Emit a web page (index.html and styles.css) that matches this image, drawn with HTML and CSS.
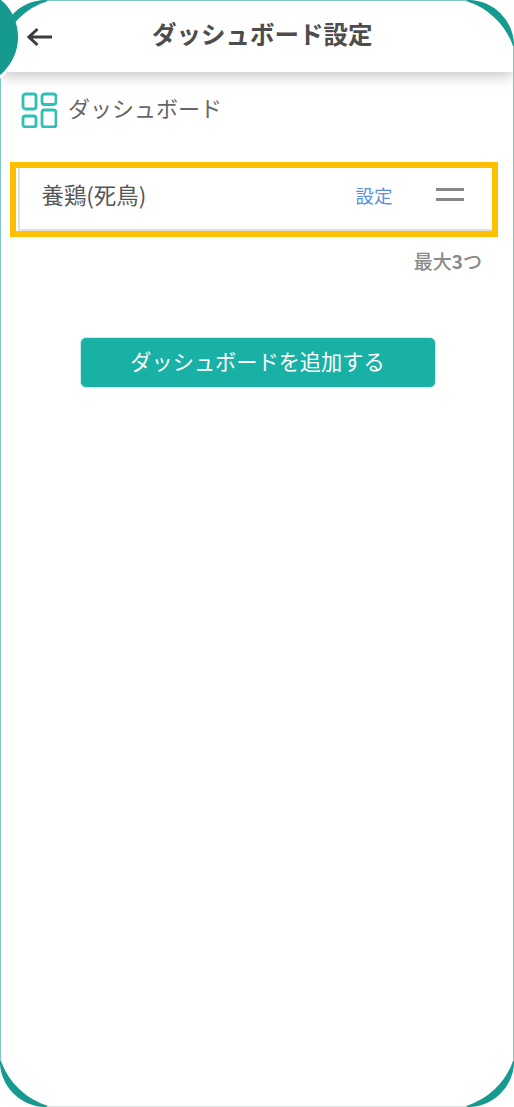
FILE: index.html
```html
<!DOCTYPE html>
<html lang="ja">
  <head>
    <meta charset="UTF-8" />
    <meta name="viewport" content="width=device-width, initial-scale=1.0" />
    <title>ダッシュボード設定</title>
    <link rel="stylesheet" href="styles.css">
  </head>
  <body>
    <div class="screen">
      <header class="top-bar">
        <button class="back-button" aria-label="戻る">
          <svg width="26" height="20" viewBox="0 0 26 20" fill="none" stroke="#3c3c3c" stroke-width="3">
            <path d="M25 10H2M10.500 2L2 10l8.500 8" />
          </svg>
        </button>
        <h1 class="page-title">ダッシュボード設定</h1>
      </header>

      <div class="section-label">
        <svg class="section-icon" width="36" height="36" viewBox="0 0 36 36" fill="none" stroke="#2fbfb3" stroke-width="2.800">
          <rect x="2" y="2" width="13" height="15" rx="2.500" />
          <rect x="21" y="2" width="14" height="10.500" rx="2.500" />
          <rect x="2" y="24" width="13" height="11" rx="2.500" />
          <rect x="21" y="18" width="14" height="17" rx="2.500" />
        </svg>
        <span class="section-text">ダッシュボード</span>
      </div>

      <div class="highlight">
        <div class="dashboard-row">
          <span class="dashboard-name">養鶏(死鳥)</span>
          <a class="settings-link">設定</a>
          <span class="drag-handle"></span>
        </div>
      </div>

      <p class="limit-note">最大<b>3</b>つ</p>

      <button class="add-button">ダッシュボードを追加する</button>
    </div>

    <div class="side-dot"></div>
    <svg class="frame-corners" width="514" height="1107" viewBox="0 0 514 1107">
      <path d="M468 0A46 46 0 0 1 514 46L513 46A72 72 0 0 0 466 1Z" fill="#169a90" />
      <path d="M468 0A46 46 0 0 1 514 46L513 46A72 72 0 0 0 466 1Z" fill="#169a90" transform="matrix(1 0 0 -1 0 1107)" />
      <path d="M468 0A46 46 0 0 1 514 46L513 46A72 72 0 0 0 466 1Z" fill="#169a90" transform="matrix(-1 0 0 -1 514 1107)" />
      <path d="M468 0A46 46 0 0 1 514 46L513 46A72 72 0 0 0 466 1Z" fill="#169a90" transform="matrix(-1 0 0 1 514 0)" />
    </svg>
  </body>
</html>
```

FILE: styles.css
```css
body {
  margin: 0;
  width: 514px;
  height: 1107px;
  background: white;
  font-family: "Noto Sans CJK JP", "Noto Sans", sans-serif;
  color: #555;
  overflow: hidden;
  position: relative;
}

.screen {
  height: 1107px;
  box-sizing: border-box;
  border-left: 1.500px solid #7fc9c4;
  border-right: 1.500px solid #7fc9c4;
  border-top: 1px solid #7fc9c4;
  border-bottom: 1px solid #d5e6e4;
  border-radius: 46px;
  overflow: hidden;
  display: flex;
  flex-direction: column;
}

.top-bar {
  height: 71px;
  flex-shrink: 0;
  display: flex;
  align-items: center;
  background: white;
  box-shadow: 0 5px 12px rgba(0, 0, 0, 0.2);
  position: relative;
}

.back-button {
  margin-left: 26px;
  padding: 0;
  border: none;
  background: none;
  display: flex;
}

.page-title {
  margin: 0 0 4px 99px;
  font-size: 24.500px;
  font-weight: 700;
  color: #4d4d4d;
  line-height: 1;
}

.section-label {
  margin: 20px 0 0 20px;
  display: flex;
  align-items: center;
  gap: 11px;
  font-size: 22px;
  line-height: 30px;
  color: #666;
}

.section-text {
  margin-bottom: 6px;
}

.highlight {
  margin: 34px 0 0 8.500px;
  width: 488px;
  height: 75px;
  box-sizing: border-box;
  border: 6px solid #ffc000;
}

.dashboard-row {
  height: 100%;
  box-sizing: border-box;
  margin-left: 2px;
  border-left: 2px solid #e0e0e0;
  border-bottom: 2px solid #e0e0e0;
  display: flex;
  align-items: center;
  padding-right: 28px;
  padding-bottom: 2px;
}

.dashboard-name {
  margin: 0 0 8px 22px;
  font-size: 22.400px;
  color: #555;
}

.settings-link {
  margin: 0 0 6px auto;
  font-size: 18.500px;
  color: #5b8fdc;
}

.drag-handle {
  margin-left: 43px;
  width: 28px;
  height: 7px;
  border-top: 3px solid #888;
  border-bottom: 3px solid #888;
  margin-bottom: 7px;
}

.limit-note {
  margin: 10px 31px 0 0;
  text-align: right;
  font-size: 19px;
  font-weight: 500;
  line-height: 28px;
  color: #8a8a8a;
}

.add-button {
  margin: 62px 0 0 78.500px;
  width: 356px;
  height: 51px;
  padding: 0 0 4px;
  background: #19b1a5;
  border: 1px solid #cfeeea;
  border-radius: 6px;
  color: white;
  font-family: inherit;
  font-size: 21.200px;
}

.side-dot {
  position: absolute;
  left: -80px;
  top: -12px;
  width: 98px;
  height: 98px;
  border-radius: 50%;
  background: #169a90;
  box-shadow: 0 0 0 3px white;
}

.frame-corners {
  position: absolute;
  left: 0;
  top: 0;
  pointer-events: none;
}
```
